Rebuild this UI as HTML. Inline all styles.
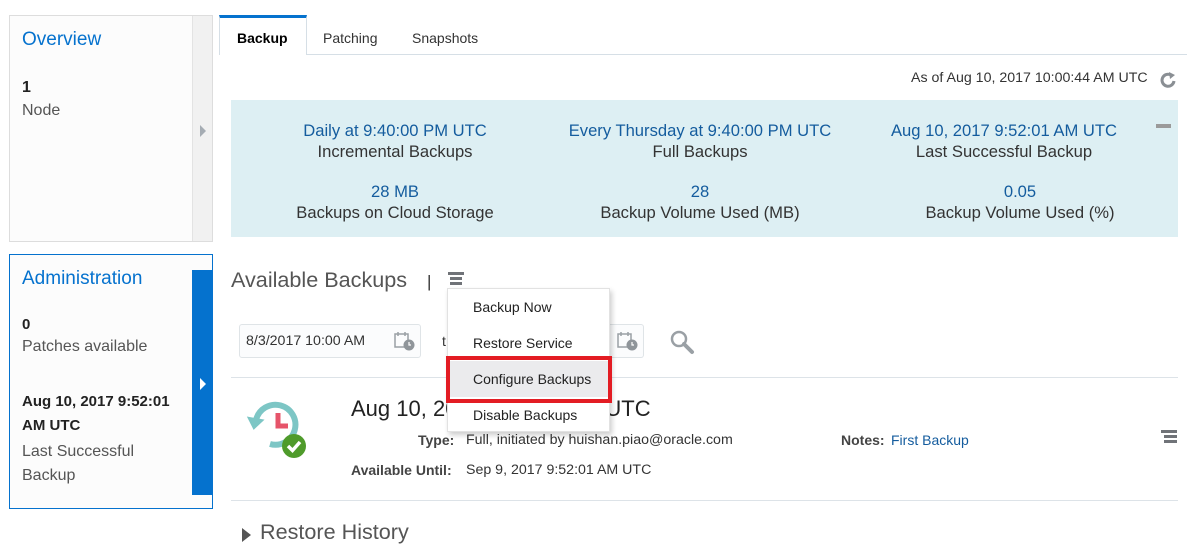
<!DOCTYPE html>
<html><head><meta charset="utf-8"><style>
*{box-sizing:border-box;margin:0;padding:0}
body{width:1187px;height:554px;background:#fff;font-family:"Liberation Sans",Arial,sans-serif;position:relative;overflow:hidden;color:#333}
.a{position:absolute}
.blue{color:#0572ce}
.sum{text-align:center;font-size:16.6px;line-height:21px;color:#333}
.sum .v{color:#145c9e}
.mi{position:absolute;left:0;width:163px;height:36px;line-height:36px;padding-left:25px;font-size:14px;color:#222}
.ham span{display:block;height:3px;background:#707378;margin-bottom:2px}
</style></head><body>

<div class="a" style="left:9px;top:15px;width:204px;height:227px;border:1px solid #ddd;background:#fcfcfc"></div>
<div class="a" style="left:192px;top:16px;width:20px;height:225px;background:#f1f1f1;border-left:1px solid #e3e3e3"></div>
<div class="a" style="left:200px;top:125px;width:0;height:0;border-left:6px solid #a5acb3;border-top:6px solid transparent;border-bottom:6px solid transparent"></div>
<div class="a blue" style="left:22px;top:29px;font-size:19px">Overview</div>
<div class="a" style="left:22px;top:79px;font-size:16px;font-weight:bold;color:#222">1</div>
<div class="a" style="left:22px;top:102px;font-size:16px;color:#555">Node</div>

<div class="a" style="left:9px;top:254px;width:204px;height:255px;border:1px solid #0572ce;background:#fcfcfc"></div>
<div class="a" style="left:192px;top:270px;width:20px;height:225px;background:#0572ce"></div>
<div class="a" style="left:200px;top:378px;width:0;height:0;border-left:6px solid #fff;border-top:6px solid transparent;border-bottom:6px solid transparent"></div>
<div class="a blue" style="left:22px;top:268px;font-size:19px">Administration</div>
<div class="a" style="left:22px;top:316px;font-size:15px;font-weight:bold;color:#222">0</div>
<div class="a" style="left:22px;top:338px;font-size:16px;color:#555">Patches available</div>
<div class="a" style="left:22px;top:390px;font-size:15px;font-weight:bold;color:#222;line-height:24px">Aug 10, 2017 9:52:01<br>AM UTC</div>
<div class="a" style="left:22px;top:440px;font-size:16px;color:#555;line-height:24px">Last Successful<br>Backup</div>

<div class="a" style="left:219px;top:54px;width:968px;height:1px;background:#d6dfe6"></div>
<div class="a" style="left:219px;top:15px;width:88px;height:40px;background:#fff;border:1px solid #d6dfe6;border-bottom:none;border-top:3px solid #0572ce"></div>
<div class="a" style="left:237px;top:30px;font-size:14px;font-weight:bold;color:#000">Backup</div>
<div class="a" style="left:323px;top:30px;font-size:14px;color:#333">Patching</div>
<div class="a" style="left:412px;top:30px;font-size:14px;color:#333">Snapshots</div>

<div class="a" style="left:911px;top:70px;font-size:14.2px;color:#333">As of Aug 10, 2017 10:00:44 AM UTC</div>
<svg class="a" style="left:1159px;top:71px" width="20" height="18" viewBox="0 0 20 18"><path d="M15 10 A6 6 0 1 1 12 4" fill="none" stroke="#8a8f94" stroke-width="3"/><path d="M10 1 L16 4 L11 8 Z" fill="#8a8f94"/></svg>

<div class="a" style="left:231px;top:100px;width:947px;height:137px;background:#ddeff3"></div>
<div class="a" style="left:1156px;top:124px;width:15px;height:4px;background:#9a9a9a"></div>
<div class="a sum" style="left:231px;top:120px;width:328px"><div class="v">Daily at 9:40:00 PM UTC</div><div>Incremental Backups</div></div>
<div class="a sum" style="left:545px;top:120px;width:310px"><div class="v">Every Thursday at 9:40:00 PM UTC</div><div>Full Backups</div></div>
<div class="a sum" style="left:855px;top:120px;width:298px"><div class="v">Aug 10, 2017 9:52:01 AM UTC</div><div>Last Successful Backup</div></div>
<div class="a sum" style="left:231px;top:181px;width:328px"><div class="v">28 MB</div><div>Backups on Cloud Storage</div></div>
<div class="a sum" style="left:545px;top:181px;width:310px"><div class="v">28</div><div>Backup Volume Used (MB)</div></div>
<div class="a sum" style="left:865px;top:181px;width:310px"><div class="v">0.05</div><div>Backup Volume Used (%)</div></div>

<div class="a" style="left:231px;top:267px;font-size:21.6px;color:#555">Available Backups</div>
<div class="a" style="left:427px;top:272px;font-size:17px;color:#333">|</div>
<div class="a ham" style="left:448px;top:272px;width:16px"><span></span><span style="margin-left:2px;width:12px"></span><span style="margin-left:2px;width:12px"></span></div>

<div class="a" style="left:239px;top:324px;width:182px;height:34px;border:1px solid #dfe4e7;border-radius:3px;background:#fbfcfd"></div>
<div class="a" style="left:246px;top:333px;font-size:14.2px;color:#333">8/3/2017 10:00 AM</div>
<svg class="a" style="left:394px;top:331px" width="22" height="20" viewBox="0 0 22 20"><rect x="1" y="3" width="13" height="13" fill="none" stroke="#9aa0a5" stroke-width="1.5"/><line x1="4" y1="1" x2="4" y2="5" stroke="#9aa0a5" stroke-width="1.5"/><line x1="11" y1="1" x2="11" y2="5" stroke="#9aa0a5" stroke-width="1.5"/><circle cx="15" cy="14" r="5.5" fill="#8f959a"/><path d="M15 11v3h2" stroke="#fff" fill="none" stroke-width="1.2"/></svg>
<div class="a" style="left:442px;top:333px;font-size:14px">t</div>
<div class="a" style="left:600px;top:324px;width:44px;height:34px;border:1px solid #dfe4e7;border-left:none;border-radius:0 3px 3px 0;background:#fbfcfd"></div>
<svg class="a" style="left:617px;top:331px" width="22" height="20" viewBox="0 0 22 20"><rect x="1" y="3" width="13" height="13" fill="none" stroke="#9aa0a5" stroke-width="1.5"/><line x1="4" y1="1" x2="4" y2="5" stroke="#9aa0a5" stroke-width="1.5"/><line x1="11" y1="1" x2="11" y2="5" stroke="#9aa0a5" stroke-width="1.5"/><circle cx="15" cy="14" r="5.5" fill="#8f959a"/><path d="M15 11v3h2" stroke="#fff" fill="none" stroke-width="1.2"/></svg>
<svg class="a" style="left:670px;top:330px" width="26" height="26" viewBox="0 0 26 26"><circle cx="9" cy="9" r="7" fill="none" stroke="#9aa0a5" stroke-width="2.5"/><line x1="14" y1="14" x2="22" y2="22" stroke="#9aa0a5" stroke-width="4" stroke-linecap="round"/></svg>

<div class="a" style="left:231px;top:377px;width:947px;height:1px;background:#dde3e8"></div>

<svg class="a" style="left:242px;top:400px" width="68" height="62" viewBox="0 0 68 62"><path d="M14 20 A20 20 0 1 1 28 44" fill="none" stroke="#7dc6c5" stroke-width="6"/><path d="M4 18 L22 18 L13 30 Z" fill="#7dc6c5" transform="rotate(10 13 22)"/><path d="M36 13 V26 H46" fill="none" stroke="#e6546a" stroke-width="5"/><circle cx="52" cy="46" r="12" fill="#4f9b2b"/><path d="M46 46 L50.5 50.5 L58 42" fill="none" stroke="#fff" stroke-width="3.5"/></svg>
<div class="a" style="left:351px;top:396px;font-size:22px;color:#222">Aug 10, 2017 9:52:01 AM UTC</div>
<div class="a" style="left:418px;top:432px;font-size:14px;font-weight:bold;color:#444">Type:</div>
<div class="a" style="left:466px;top:432px;font-size:14.2px;color:#333">Full, initiated by huishan.piao@oracle.com</div>
<div class="a" style="left:841px;top:432px;font-size:14px;font-weight:bold;color:#444">Notes:</div>
<div class="a" style="left:891px;top:432px;font-size:14px;color:#145c9e">First Backup</div>
<div class="a" style="left:351px;top:462px;font-size:14px;font-weight:bold;color:#444">Available Until:</div>
<div class="a" style="left:466px;top:462px;font-size:14.2px;color:#333">Sep 9, 2017 9:52:01 AM UTC</div>
<div class="a ham" style="left:1161px;top:430px;width:16px"><span></span><span style="margin-left:3px;width:13px"></span><span style="margin-left:3px;width:13px"></span></div>

<div class="a" style="left:231px;top:500px;width:947px;height:1px;background:#dde3e8"></div>
<div class="a" style="left:242px;top:528px;width:0;height:0;border-left:9px solid #555;border-top:7px solid transparent;border-bottom:7px solid transparent"></div>
<div class="a" style="left:260px;top:519px;font-size:21.6px;color:#555">Restore History</div>

<div class="a" style="left:447px;top:288px;width:163px;height:144px;background:#fff;border:1px solid #e2e2e2;box-shadow:2px 3px 5px rgba(0,0,0,.2)">
<div class="mi" style="top:0">Backup Now</div>
<div class="mi" style="top:36px">Restore Service</div>
<div class="mi" style="top:72px;background:#ebebed">Configure Backups</div>
<div class="mi" style="top:108px">Disable Backups</div>
</div>
<div class="a" style="left:446px;top:356px;width:166px;height:47px;border:4px solid #e31c23"></div>

</body></html>
